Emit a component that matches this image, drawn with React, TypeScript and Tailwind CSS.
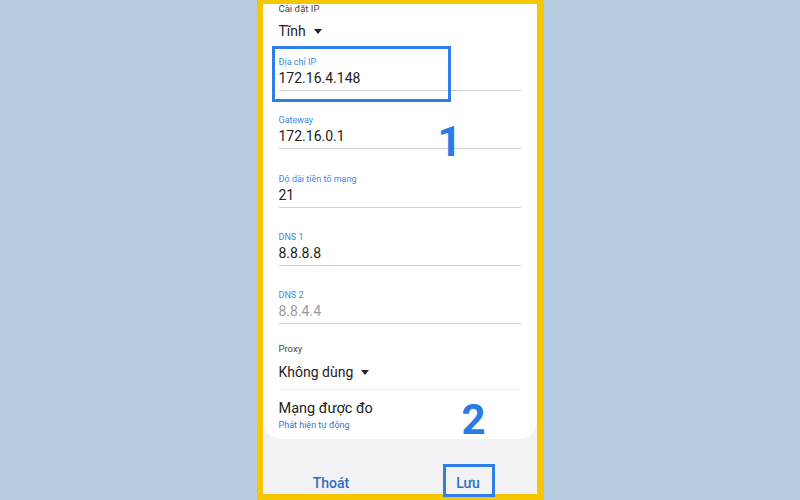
import React from "react";

const fields = [
  { label: "Địa chỉ IP", value: "172.16.4.148" },
  { label: "Gateway", value: "172.16.0.1" },
  { label: "Độ dài tiền tố mạng", value: "21" },
  { label: "DNS 1", value: "8.8.8.8" },
  { label: "DNS 2", value: "8.8.4.4", muted: true },
];

function Caret() {
  return (
    <svg className="ml-[8px] w-[8px] h-[5px]" viewBox="0 0 8 5">
      <path d="M0 0h8L4 5z" fill="#222" />
    </svg>
  );
}

export default function App() {
  return (
    <div className="w-[800px] h-[500px] bg-[#b7cce0] flex justify-center font-['Roboto',sans-serif]">
      <div className="w-[287px] h-full flex flex-col bg-[#f2f2f4] border-[#f6c600] border-t-4 border-l-[6px] border-r-[7px] border-b-[6px]">
        {/* Settings card */}
        <div className="relative bg-white rounded-b-[18px] px-4 pb-[8px]">
          <p className="text-[9.5px] leading-[10px] text-[#444]">Cài đặt IP</p>
          <div className="mt-[7px] h-[20px] flex items-center text-[14px] text-[#222]">
            Tĩnh
            <Caret />
          </div>

          <div className="mt-[15px]">
            {fields.map((f, i) => (
              <div key={f.label} className={`relative border-b border-[#cfcfcf] pb-[2px] ${i > 0 ? "mt-[23.25px]" : ""}`}>
                <p className="text-[9px] leading-[12px] text-[#3a8ae0]">{f.label}</p>
                <p className={`text-[14px] leading-[20px] ${f.muted ? "text-[#9b9b9b]" : "text-[#222]"}`}>{f.value}</p>
                {i === 0 && (
                  <div className="absolute left-[-7px] top-[-10px] w-[179px] h-[56px] border-[3px] border-[#2f7de6]" />
                )}
              </div>
            ))}
          </div>

          {/* Proxy */}
          <div className="mt-[19px] border-b border-[#ececec] pb-[7px]">
            <p className="text-[9.5px] leading-[12px] text-[#444]">Proxy</p>
            <div className="mt-[7px] h-[20px] flex items-center text-[14px] text-[#222]">
              Không dùng
              <Caret />
            </div>
          </div>

          {/* Metered network */}
          <div className="mt-[9px]">
            <p className="text-[14.5px] leading-[20px] text-[#222]">Mạng được đo</p>
            <p className="text-[9px] leading-[12px] text-[#2f74d0]">Phát hiện tự động</p>
          </div>

          <span className="absolute left-[175px] top-[117px] w-[24px] text-center text-[42px] leading-none font-bold text-[#2a7be4]">1</span>
          <span className="absolute left-[199px] top-[395px] w-[24px] text-center text-[42px] leading-none font-bold text-[#2a7be4]">2</span>
        </div>

        {/* Buttons */}
        <div className="flex-1 flex">
          <div className="flex-1 pt-[32px] text-center">
            <span className="text-[14px] leading-[20px] font-medium text-[#2d6fc2]">Thoát</span>
          </div>
          <div className="relative flex-1 pt-[32px] text-center">
            <span className="text-[14px] leading-[20px] font-medium text-[#2d6fc2]">Lưu</span>
            <div className="absolute left-[43px] top-[25px] w-[52px] h-[33px] border-[3px] border-[#2f7de6]" />
          </div>
        </div>
      </div>
    </div>
  );
}
